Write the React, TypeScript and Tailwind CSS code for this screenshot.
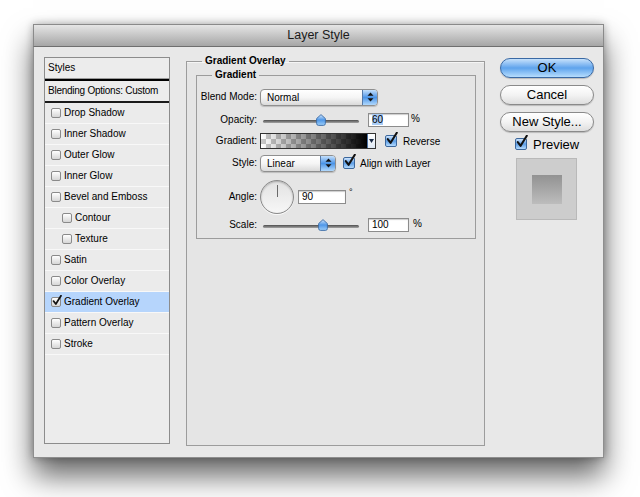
import React from 'react'

const styleItems = [
  { label: 'Drop Shadow' },
  { label: 'Inner Shadow' },
  { label: 'Outer Glow' },
  { label: 'Inner Glow' },
  { label: 'Bevel and Emboss' },
  { label: 'Contour', indent: true },
  { label: 'Texture', indent: true },
  { label: 'Satin' },
  { label: 'Color Overlay' },
  { label: 'Gradient Overlay', checked: true, selected: true },
  { label: 'Pattern Overlay' },
  { label: 'Stroke' },
]

const Check = ({ className = '' }: { className?: string }) => (
  <svg viewBox="0 0 12 13" className={`absolute ${className}`} fill="none">
    <path d="M1.8 7.2 L4.6 10.8 L10.8 0.8" stroke="#111" strokeWidth="2.1" strokeLinecap="round" strokeLinejoin="round" />
  </svg>
)

// small grey box used in the styles list
const ListBox = ({ checked }: { checked?: boolean }) => (
  <span className="relative w-[10px] h-[10px] shrink-0 rounded-[2px] border border-[#8a8a8a] bg-linear-to-b from-white to-[#d6d6d6]">
    {checked && <Check className="w-[10px] h-[11px] left-[0px] -top-[3px]" />}
  </span>
)

// blue aqua checkbox
const BlueBox = () => (
  <span className="relative w-[12px] h-[12px] shrink-0 rounded-[2px] border border-[#3c679c] bg-linear-to-b from-[#cfe5fc] via-[#5b9de6] to-[#b3dafd]">
    <Check className="w-[12px] h-[13px] left-[0px] -top-[4px]" />
  </span>
)

const Stepper = () => (
  <span className="w-[15px] h-full shrink-0 flex items-center justify-center border-l border-[#5479a8] bg-linear-to-b from-[#c4e0fc] via-[#4b94e6] to-[#b1d9fd]">
    <svg width="7" height="10" viewBox="0 0 7 10">
      <path d="M3.5 0.5 L6.5 3.8 H0.5Z M3.5 9.5 L0.5 6.2 H6.5Z" fill="#111" />
    </svg>
  </span>
)

const Select = ({ value, width }: { value: string; width: string }) => (
  <div className={`flex h-[17px] ${width} rounded-[4px] border border-[#8f8f8f] overflow-hidden bg-linear-to-b from-white via-[#f5f5f5] to-[#dadada] shadow-[0_1px_1px_rgba(0,0,0,0.18)]`}>
    <span className="flex-1 pl-[6px] text-[10px] leading-[15px]">{value}</span>
    <Stepper />
  </div>
)

const Thumb = ({ left }: { left: string }) => (
  <svg width="10" height="12" viewBox="0 0 10 12" className={`absolute top-[0px] ${left}`}>
    <defs>
      <linearGradient id="thumbFill" x1="0" y1="0" x2="0" y2="1">
        <stop offset="0" stopColor="#d2e7fd" />
        <stop offset="0.5" stopColor="#4f97e8" />
        <stop offset="1" stopColor="#9fd0fb" />
      </linearGradient>
    </defs>
    <path d="M5 0.6 L9.4 4.6 V9.4 Q9.4 11.4 7.4 11.4 H2.6 Q0.6 11.4 0.6 9.4 V4.6 Z" fill="url(#thumbFill)" stroke="#3b6aa3" strokeWidth="0.9" />
  </svg>
)

const Slider = ({ left }: { left: string }) => (
  <div className="relative w-[102px] h-[12px] flex items-center">
    <div className="mx-[3px] mt-[3px] flex-1 h-[3px] rounded-full bg-linear-to-b from-[#4e4e4e] to-[#a5a5a5]" />
    <Thumb left={left} />
  </div>
)

const NumField = ({ value, width, selected }: { value: string; width: string; selected?: boolean }) => (
  <div className={`${width} h-[14px] border border-[#8c8c8c] bg-white pl-[3px] text-[10px] leading-[12px] shadow-[inset_0_1px_1px_rgba(0,0,0,0.2)]`}>
    <span className={selected ? 'bg-[#a9cdf7]' : ''}>{value}</span>
  </div>
)

const Row = ({ label, h, mt, children }: { label: string; h: string; mt: string; children: React.ReactNode }) => (
  <div className={`flex items-center ${h} ${mt}`}>
    <span className="w-[60px] text-right text-[10px] leading-[12px]">{label}</span>
    <div className="ml-[3px] flex items-center">{children}</div>
  </div>
)

const AquaButton = ({ children, primary, className = '' }: { children: React.ReactNode; primary?: boolean; className?: string }) => (
  <button
    className={`block w-[94px] h-[20px] shrink-0 rounded-full border text-[13px] leading-[18px] text-black shadow-[0_1px_1px_rgba(0,0,0,0.2)] ${className} ${
      primary
        ? 'border-[#3a69a4] bg-linear-to-b from-[#c6e1fb] via-[#5ea3ec] to-[#b6ddfd]'
        : 'border-[#8a8a8a] bg-linear-to-b from-white via-[#f3f3f3] to-[#dedede]'
    }`}
  >
    {children}
  </button>
)

export default function App() {
  return (
    <div className="w-[640px] h-[497px] overflow-hidden bg-white pt-[24px] pl-[33px] font-['Liberation_Sans',Arial,sans-serif] text-black">
      <div className="w-[571px] h-[434px] flex flex-col shadow-[0_18px_28px_rgba(0,0,0,0.6),0_0_8px_rgba(0,0,0,0.3)]">
        {/* title bar */}
        <div className="h-[23px] shrink-0 flex items-center justify-center border border-[#8a8a8a] border-b-[#6f6f6f] bg-linear-to-b from-[#e6e6e6] to-[#a6a6a6] text-[12.5px] text-[#1a1a1a]">
          Layer Style
        </div>

        <div className="flex-1 flex items-start pl-[10px] pt-[10px] bg-[#e8e8e8] border-x border-b border-[#8e8e8e]">
          {/* styles list */}
          <div className="w-[126px] h-[387px] flex flex-col border border-[#8c8c8c] bg-[#ececec] text-[10px] leading-[12px]">
            <div className="h-[21px] flex items-center pl-[3px] border-b border-[#9a9a9a]">Styles</div>
            <div className="h-[2px] bg-black" />
            <div className="h-[20px] flex items-center pl-[3px] tracking-[-0.25px] whitespace-nowrap">Blending Options: Custom</div>
            <div className="h-[2px] bg-[#1a1a1a]" />
            {styleItems.map(item => (
              <div
                key={item.label}
                className={`h-[21px] flex items-center border-b border-[#f8f8f8] ${item.indent ? 'pl-[17px]' : 'pl-[6px]'} ${
                  item.selected ? 'bg-[#b6d5fc]' : 'bg-[#ebebeb]'
                }`}
              >
                <ListBox checked={item.checked} />
                <span className="ml-[3px]">{item.label}</span>
              </div>
            ))}
          </div>

          {/* settings */}
          <fieldset className="ml-[16px] -mt-[2px] w-[299px] h-[391px] border border-[#9c9c9c] bg-[#e5e5e5] shadow-[inset_0_1px_0_rgba(255,255,255,0.6)]">
            <legend className="ml-[15px] px-[3px] text-[10px] leading-[12px] font-bold">Gradient Overlay</legend>
            <fieldset className="ml-[9px] mr-[8px] mt-[2px] border border-[#9c9c9c] pb-[5px] pt-[7px]">
              <legend className="ml-[15px] px-[3px] text-[10px] leading-[12px] font-bold">Gradient</legend>

              <Row label="Blend Mode:" h="h-[18px]" mt="mt-0">
                <Select value="Normal" width="w-[118px]" />
              </Row>

              <Row label="Opacity:" h="h-[16px]" mt="mt-[6px]">
                <Slider left="left-[56px]" />
                <div className="ml-[6px]">
                  <NumField value="60" width="w-[41px]" selected />
                </div>
                <span className="ml-[2px] text-[10px] -mt-[3px]">%</span>
              </Row>

              <Row label="Gradient:" h="h-[16px]" mt="mt-[5px]">
                <div className="flex w-[116px] h-[16px] border border-[#333]">
                  <div className="flex-1 [background:repeating-conic-gradient(#c9c9c9_0%_25%,#ffffff_0%_50%)_0_0/10px_10px]">
                    <div className="w-full h-full bg-linear-to-r from-transparent to-black" />
                  </div>
                  <div className="w-[8px] flex items-center justify-center bg-linear-to-b from-white to-[#dfe8f3] border-l border-[#4b6fa0]">
                    <svg width="5" height="4" viewBox="0 0 5 4">
                      <path d="M0 0 H5 L2.5 4Z" fill="#1b2b45" />
                    </svg>
                  </div>
                </div>
                <div className="ml-[9px] flex items-center">
                  <BlueBox />
                  <span className="ml-[6px] text-[10px]">Reverse</span>
                </div>
              </Row>

              <Row label="Style:" h="h-[18px]" mt="mt-[5px]">
                <Select value="Linear" width="w-[76px]" />
                <div className="ml-[7px] flex items-center">
                  <BlueBox />
                  <span className="ml-[5px] text-[10px]">Align with Layer</span>
                </div>
              </Row>

              <Row label="Angle:" h="h-[36px]" mt="mt-[7px]">
                <div className="relative w-[34px] h-[34px] rounded-full border border-[#8a8a8a] bg-linear-to-b from-[#e2e2e2] to-[#f7f7f7] shadow-[inset_0_1px_2px_rgba(0,0,0,0.25),0_1px_0_rgba(255,255,255,0.8)]">
                  <div className="absolute left-[15.5px] top-[4px] w-[1px] h-[12px] bg-[#6a6a6a]" />
                </div>
                <div className="ml-[4px]">
                  <NumField value="90" width="w-[48px]" />
                </div>
                <span className="ml-[3px] -mt-[8px] text-[9px]">°</span>
              </Row>

              <Row label="Scale:" h="h-[16px]" mt="mt-[2px]">
                <Slider left="left-[58px]" />
                <div className="ml-[6px]">
                  <NumField value="100" width="w-[41px]" />
                </div>
                <span className="ml-[4px] text-[10px] -mt-[3px]">%</span>
              </Row>
            </fieldset>
          </fieldset>

          {/* buttons */}
          <div className="ml-[15px] w-[94px] flex flex-col">
            <AquaButton primary className="mt-[1px]">OK</AquaButton>
            <AquaButton className="mt-[7px]">Cancel</AquaButton>
            <AquaButton className="mt-[7px]">New Style...</AquaButton>
            <div className="mt-[6px] h-[12px] flex items-center pl-[15px]">
              <BlueBox />
              <span className="ml-[6px] mt-[2px] text-[13px] leading-[14px]">Preview</span>
            </div>
            <div className="mt-[8px] ml-[16px] w-[61px] h-[62px] flex items-center justify-center border border-[#b9b9b9] bg-[#cdcdcd]">
              <div className="w-[30px] h-[29px] bg-linear-to-b from-[#929292] to-[#bdbdbd]" />
            </div>
          </div>
        </div>
      </div>
    </div>
  )
}
